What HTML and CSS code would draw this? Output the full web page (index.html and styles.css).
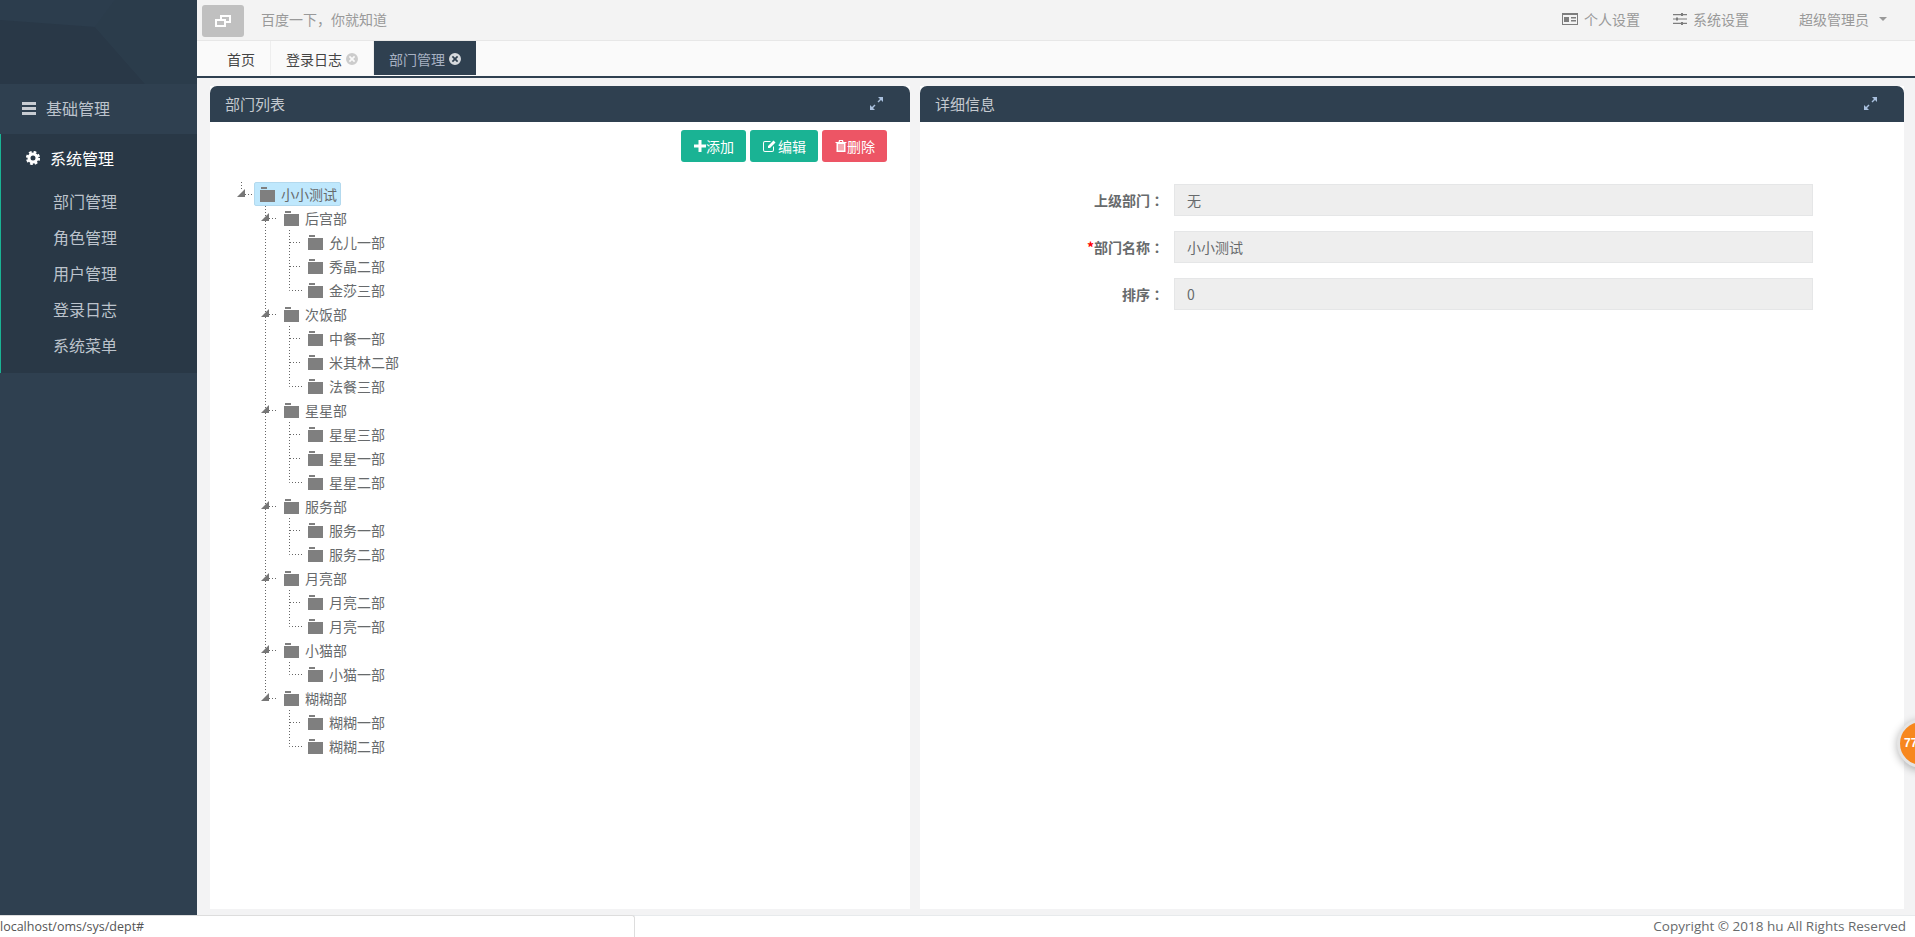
FILE: index.html
```html
<!DOCTYPE html>
<html lang="zh-CN">
<head>
<meta charset="utf-8">
<title>部门管理</title>
<link rel="stylesheet" href="styles.css">
</head>
<body>

<svg class="defs" aria-hidden="true">
	<symbol id="sw-root" viewBox="0 0 24 24">
		<path class="dots" d="M11.5 0V7M15 12.5H24"/>
		<path class="tri" d="M15 7V15H7Z"/>
	</symbol>
	<symbol id="sw-open" viewBox="0 0 24 24">
		<path class="dots" d="M11.5 0V24M15 12.5H24"/>
		<path class="tri" d="M15 7V15H7Z"/>
	</symbol>
	<symbol id="sw-open-last" viewBox="0 0 24 24">
		<path class="dots" d="M11.5 0V8M15 12.5H24"/>
		<path class="tri" d="M15 7V15H7Z"/>
	</symbol>
	<symbol id="sw-center" viewBox="0 0 24 24">
		<path class="dots" d="M11.5 0V24M12 12.5H24"/>
	</symbol>
	<symbol id="sw-bottom" viewBox="0 0 24 24">
		<path class="dots" d="M11.5 0V12.5H24"/>
	</symbol>
	<symbol id="folder" viewBox="0 0 15 15">
		<path d="M1 0H7V2H1ZM0 3H15V15H0Z"/>
	</symbol>
	<symbol id="expand" viewBox="0 0 13 13">
		<path d="M8 0H13V5L11 3L8.5 5.5L7.5 4.5L10 2ZM5 13H0V8L2 10L4.5 7.5L5.5 8.5L3 11Z"/>
	</symbol>
	<symbol id="close" viewBox="0 0 12 12">
		<path fill-rule="evenodd" d="M6 0A6 6 0 1 1 6 12A6 6 0 1 1 6 0ZM4 2.8L2.8 4L4.8 6L2.8 8L4 9.2L6 7.2L8 9.2L9.2 8L7.2 6L9.2 4L8 2.8L6 4.800Z"/>
	</symbol>
</svg>

<aside class="sidebar">
	<div class="sidebarHead">
		<svg viewBox="0 0 197 84" width="197" height="84" preserveAspectRatio="none">
			<rect width="197" height="84" fill="#2c3d4d"/>
			<path d="M0 20L95 27L145 84H0Z" fill="#293847"/>
			<path d="M95 27L115 0H197V84H145Z" fill="#2b3c4b"/>
		</svg>
	</div>
	<a class="menuTitle">
		<svg class="menuIcon" viewBox="0 0 14 13" width="14" height="13"><path d="M0 0H14V3H0ZM0 5H14V8H0ZM0 10H14V13H0Z"/></svg>
		基础管理
	</a>
	<div class="menuOpen">
		<a class="menuTitle menuTitleActive">
			<svg class="gear" viewBox="0 0 14 14" width="14" height="14">
				<circle cx="7" cy="7" r="4" fill="none" stroke="#fff" stroke-width="3"/>
				<circle cx="7" cy="7" r="6" fill="none" stroke="#fff" stroke-width="2.200" stroke-dasharray="2.700 2"/>
			</svg>
			系统管理
		</a>
		<ul class="subMenu">
			<li>部门管理</li>
			<li>角色管理</li>
			<li>用户管理</li>
			<li>登录日志</li>
			<li>系统菜单</li>
		</ul>
	</div>
</aside>

<div class="main">
	<header class="topBar">
		<button class="toggleBtn">
			<svg viewBox="0 0 16 12" width="16" height="12"><path fill="#fff" fill-rule="evenodd" d="M5 0H16V8H11V12H0V4H5ZM7 2V4H11V6H14V2ZM2 6V10H9V6Z"/></svg>
		</button>
		<span class="slogan">百度一下，你就知道</span>
		<div class="topRight">
			<a class="topLink">
				<svg viewBox="0 0 16 12" width="16" height="12"><path fill="#7d7d7d" fill-rule="evenodd" d="M0 0H16V12H0ZM1 2V11H15V2ZM2 4H7V9H2ZM9 4H14V5.500H9ZM9 7H14V8.500H9Z"/></svg>
				个人设置
			</a>
			<a class="topLink">
				<svg viewBox="0 0 14 12" width="14" height="12"><path fill="#7d7d7d" d="M0 1H8V0H10V1H14V2.200H10V3H8V2.200H0ZM0 5.400H3V4.500H5V5.400H14V6.600H5V7.500H3V6.600H0ZM0 9.800H8V9H10V9.800H14V11H10V12H8V11H0Z"/></svg>
				系统设置
			</a>
			<a class="topLink userLink">
				超级管理员
				<span class="caret"></span>
			</a>
		</div>
	</header>

	<nav class="tabs">
		<a class="tab tabHome">首页</a>
		<a class="tab">登录日志 <svg class="tabClose" width="12" height="12"><use href="#close"/></svg></a>
		<a class="tab tabActive">部门管理 <svg class="tabClose" width="12" height="12"><use href="#close"/></svg></a>
	</nav>

	<div class="content">
		<section class="panel panelLeft">
			<div class="panelHead">
				<span>部门列表</span>
				<svg class="expand" width="13" height="13"><use href="#expand"/></svg>
			</div>
			<div class="panelBody">
				<div class="toolbar">
					<button class="btn btnAdd">
						<svg viewBox="0 0 12 12" width="12" height="12"><path fill="#fff" d="M4.500 0H7.500V4.500H12V7.500H7.500V12H4.500V7.500H0V4.500H4.500Z"/></svg>添加
					</button>
					<button class="btn btnEdit">
						<svg viewBox="0 0 13 12" width="13" height="12"><path fill="#fff" fill-rule="evenodd" d="M2 1H8L7 2H2A1 1 0 0 0 1 3V10A1 1 0 0 0 2 11H9A1 1 0 0 0 10 10V7L11 6V10A2 2 0 0 1 9 12H2A2 2 0 0 1 0 10V3A2 2 0 0 1 2 1ZM10.500 0.500L12.500 2.500L7 8H5V6Z"/></svg>编辑
					</button>
					<button class="btn btnDel">
						<svg viewBox="0 0 11 12" width="12" height="12"><path fill="#fff" fill-rule="evenodd" d="M3.500 0H7.500L8 2H11V3H10V12H1V3H0V2H3ZM4.500 1L4.300 2H6.700L6.500 1ZM3 4V10.500H4V4ZM5 4V10.500H6V4ZM7 4V10.500H8V4Z"/></svg>删除
					</button>
				</div>

				<ul class="tree">
					<li>
						<div class="row"><svg class="sw"><use href="#sw-root"/></svg><a class="node nodeSelected"><svg class="fold"><use href="#folder"/></svg>小小测试</a></div>
						<ul>
							<li>
								<div class="row"><svg class="sw"><use href="#sw-open"/></svg><a class="node"><svg class="fold"><use href="#folder"/></svg>后宫部</a></div>
								<ul class="line">
									<li><div class="row"><svg class="sw"><use href="#sw-center"/></svg><a class="node"><svg class="fold"><use href="#folder"/></svg>允儿一部</a></div></li>
									<li><div class="row"><svg class="sw"><use href="#sw-center"/></svg><a class="node"><svg class="fold"><use href="#folder"/></svg>秀晶二部</a></div></li>
									<li><div class="row"><svg class="sw"><use href="#sw-bottom"/></svg><a class="node"><svg class="fold"><use href="#folder"/></svg>金莎三部</a></div></li>
								</ul>
							</li>
							<li>
								<div class="row"><svg class="sw"><use href="#sw-open"/></svg><a class="node"><svg class="fold"><use href="#folder"/></svg>次饭部</a></div>
								<ul class="line">
									<li><div class="row"><svg class="sw"><use href="#sw-center"/></svg><a class="node"><svg class="fold"><use href="#folder"/></svg>中餐一部</a></div></li>
									<li><div class="row"><svg class="sw"><use href="#sw-center"/></svg><a class="node"><svg class="fold"><use href="#folder"/></svg>米其林二部</a></div></li>
									<li><div class="row"><svg class="sw"><use href="#sw-bottom"/></svg><a class="node"><svg class="fold"><use href="#folder"/></svg>法餐三部</a></div></li>
								</ul>
							</li>
							<li>
								<div class="row"><svg class="sw"><use href="#sw-open"/></svg><a class="node"><svg class="fold"><use href="#folder"/></svg>星星部</a></div>
								<ul class="line">
									<li><div class="row"><svg class="sw"><use href="#sw-center"/></svg><a class="node"><svg class="fold"><use href="#folder"/></svg>星星三部</a></div></li>
									<li><div class="row"><svg class="sw"><use href="#sw-center"/></svg><a class="node"><svg class="fold"><use href="#folder"/></svg>星星一部</a></div></li>
									<li><div class="row"><svg class="sw"><use href="#sw-bottom"/></svg><a class="node"><svg class="fold"><use href="#folder"/></svg>星星二部</a></div></li>
								</ul>
							</li>
							<li>
								<div class="row"><svg class="sw"><use href="#sw-open"/></svg><a class="node"><svg class="fold"><use href="#folder"/></svg>服务部</a></div>
								<ul class="line">
									<li><div class="row"><svg class="sw"><use href="#sw-center"/></svg><a class="node"><svg class="fold"><use href="#folder"/></svg>服务一部</a></div></li>
									<li><div class="row"><svg class="sw"><use href="#sw-bottom"/></svg><a class="node"><svg class="fold"><use href="#folder"/></svg>服务二部</a></div></li>
								</ul>
							</li>
							<li>
								<div class="row"><svg class="sw"><use href="#sw-open"/></svg><a class="node"><svg class="fold"><use href="#folder"/></svg>月亮部</a></div>
								<ul class="line">
									<li><div class="row"><svg class="sw"><use href="#sw-center"/></svg><a class="node"><svg class="fold"><use href="#folder"/></svg>月亮二部</a></div></li>
									<li><div class="row"><svg class="sw"><use href="#sw-bottom"/></svg><a class="node"><svg class="fold"><use href="#folder"/></svg>月亮一部</a></div></li>
								</ul>
							</li>
							<li>
								<div class="row"><svg class="sw"><use href="#sw-open"/></svg><a class="node"><svg class="fold"><use href="#folder"/></svg>小猫部</a></div>
								<ul class="line">
									<li><div class="row"><svg class="sw"><use href="#sw-bottom"/></svg><a class="node"><svg class="fold"><use href="#folder"/></svg>小猫一部</a></div></li>
								</ul>
							</li>
							<li>
								<div class="row"><svg class="sw"><use href="#sw-open-last"/></svg><a class="node"><svg class="fold"><use href="#folder"/></svg>糊糊部</a></div>
								<ul>
									<li><div class="row"><svg class="sw"><use href="#sw-center"/></svg><a class="node"><svg class="fold"><use href="#folder"/></svg>糊糊一部</a></div></li>
									<li><div class="row"><svg class="sw"><use href="#sw-bottom"/></svg><a class="node"><svg class="fold"><use href="#folder"/></svg>糊糊二部</a></div></li>
								</ul>
							</li>
						</ul>
					</li>
				</ul>
			</div>
		</section>

		<section class="panel panelRight">
			<div class="panelHead">
				<span>详细信息</span>
				<svg class="expand" width="13" height="13"><use href="#expand"/></svg>
			</div>
			<div class="panelBody">
				<form class="detailForm">
					<label class="formLabel">上级部门<span class="colon" lang="zh-TW">：</span></label>
					<input class="formInput" type="text" value="无" readonly>
					<label class="formLabel"><span class="required">*</span>部门名称<span class="colon" lang="zh-TW">：</span></label>
					<input class="formInput" type="text" value="小小测试" readonly>
					<label class="formLabel">排序<span class="colon" lang="zh-TW">：</span></label>
					<input class="formInput" type="text" value="0" readonly>
				</form>
			</div>
		</section>
	</div>

	<footer class="footer">Copyright © 2018 hu All Rights Reserved</footer>
</div>

<div class="chatBadge"><span>77</span></div>
<div class="statusBubble">localhost/oms/sys/dept#</div>

</body>
</html>
```

FILE: styles.css
```css
html, body {
	height: 100%;
}
body {
	margin: 0;
	display: flex;
	overflow: hidden;
	font-family: "Noto Sans CJK SC", "Open Sans", sans-serif;
	font-size: 14px;
	color: #676a6c;
	background-color: #f3f3f4;
}
ul {
	margin: 0;
	padding: 0;
	list-style: none;
}
.defs {
	width: 0;
	height: 0;
	display: block;
	overflow: hidden;
}
.dots {
	fill: none;
	stroke: #666;
	stroke-width: 1;
	stroke-dasharray: 1 2;
}
.tri {
	fill: #777;
}

/* sidebar */
.sidebar {
	width: 197px;
	flex-shrink: 0;
	background-color: #2f4050;
	font-size: 16px;
	color: #bcc3cc;
}
.sidebarHead {
	height: 84px;
}
.sidebarHead svg {
	display: block;
}
.menuTitle {
	display: flex;
	align-items: center;
	height: 50px;
	box-sizing: border-box;
	padding-left: 22px;
	padding-bottom: 2px;
	gap: 10px;
}
.menuIcon {
	fill: #c8ccd2;
}
.menuOpen {
	height: 239px;
	box-sizing: border-box;
	background-color: #293846;
	border-left: 1px solid #1ab394;
}
.menuTitleActive {
	color: #fff;
	padding-left: 25px;
	gap: 10px;
}
.subMenu {
	padding-left: 52px;
}
.subMenu li {
	height: 36px;
	line-height: 34px;
}

/* top */
.main {
	flex: 1;
	min-width: 0;
	display: flex;
	flex-direction: column;
}
.topBar {
	height: 40px;
	display: flex;
	align-items: center;
	padding-left: 5px;
	background-color: #f3f3f3;
	border-bottom: 1px solid #e7e7e7;
	color: #999;
}
.toggleBtn {
	width: 42px;
	height: 32px;
	margin: 2px 0 0;
	padding: 0;
	border: 0;
	border-radius: 3px;
	background-color: #c0c0c0;
	display: flex;
	align-items: center;
	justify-content: center;
}
.slogan {
	margin-left: 17px;
	margin-bottom: 2px;
}
.topRight {
	margin-left: auto;
	display: flex;
	align-items: center;
	padding-right: 28px;
	margin-bottom: 2px;
}
.topLink {
	display: flex;
	align-items: center;
	gap: 6px;
	margin-left: 33px;
}
.userLink {
	margin-left: 50px;
	gap: 10px;
}
.caret {
	width: 0;
	height: 0;
	border-left: 4px solid transparent;
	border-right: 4px solid transparent;
	border-top: 4px solid #999;
}

.tabs {
	height: 37px;
	box-sizing: border-box;
	display: flex;
	background-color: #fafafa;
	border-bottom: 2px solid #2f4050;
	color: #444;
}
.tab {
	display: flex;
	align-items: center;
	gap: 4px;
	height: 34px;
	box-sizing: border-box;
	padding: 2px 15px 0;
	border-right: 1px solid #eee;
	white-space: nowrap;
}
.tabHome {
	width: 74px;
	padding-left: 30px;
	padding-right: 0;
}
.tabClose {
	fill: #ccc;
}
.tabActive {
	background-color: #2f4050;
	border-right: 0;
	color: #a7b1c2;
}
.tabActive .tabClose {
	fill: #d6d9dd;
}

/* panels */
.content {
	flex: 1;
	min-height: 0;
	display: flex;
	gap: 10px;
	padding: 8px 11px 6px 13px;
}
.panel {
	display: flex;
	flex-direction: column;
	background-color: #fff;
}
.panelLeft {
	width: 700px;
}
.panelRight {
	flex: 1;
}
.panelHead {
	height: 36px;
	box-sizing: border-box;
	flex-shrink: 0;
	display: flex;
	align-items: center;
	justify-content: space-between;
	padding: 0 27px 1px 15px;
	border-radius: 7px 7px 0 0;
	background-color: #2f4050;
	color: #c4c9cf;
	font-size: 15px;
}
.expand {
	fill: #a9c0de;
}
.panelBody {
	flex: 1;
}
.toolbar {
	display: flex;
	justify-content: flex-end;
	gap: 4px;
	padding: 8px 23px 0 0;
}
.btn {
	height: 32px;
	margin: 0;
	padding: 0 12px 0 13px;
	border: 0;
	border-radius: 3px;
	display: flex;
	align-items: center;
	color: #fff;
	font-family: inherit;
	font-size: 14px;
}
.btnAdd, .btnEdit {
	background-color: #1ab394;
}
.btnDel {
	background-color: #ed5565;
}
.btnEdit {
	gap: 2px;
}

/* tree */
.tree {
	margin: 20px 0 0 20px;
}
.tree ul {
	padding-left: 24px;
}
.tree ul.line {
	background-image: linear-gradient(#666 34%, transparent 34%);
	background-size: 1px 3px;
	background-position: 11px 0;
	background-repeat: repeat-y;
}
.row {
	display: flex;
	height: 24px;
}
.sw {
	width: 24px;
	height: 24px;
	flex-shrink: 0;
}
.node {
	display: flex;
	align-items: center;
	gap: 6px;
	padding: 0 6px;
	color: #676a6c;
}
.fold {
	width: 15px;
	height: 15px;
	fill: #7f7f7f;
}
.nodeSelected {
	box-sizing: border-box;
	padding: 0 3px 0 5px;
	background-color: #bfe8fd;
	border: 1px solid #b3d9ee;
	border-radius: 2px;
}

/* form */
.detailForm {
	display: grid;
	grid-template-columns: 244px 639px;
	grid-auto-rows: 32px;
	column-gap: 10px;
	row-gap: 15px;
	padding-top: 62px;
}
.formLabel {
	align-self: center;
	text-align: right;
	font-weight: bold;
	font-size: 14px;
	padding-bottom: 1px;
}
.colon {
	font-family: "Noto Sans CJK TC", sans-serif;
}
.required {
	color: #f00;
}
.formInput {
	box-sizing: border-box;
	width: 100%;
	height: 32px;
	padding: 0 12px 1px;
	border: 1px solid #e5e6e7;
	background-color: #eee;
	color: #676a6c;
	font-family: inherit;
	font-size: 14px;
}

/* bottom */
.footer {
	height: 21px;
	flex-shrink: 0;
	text-align: right;
	padding-right: 9px;
	background-color: #fff;
	border-top: 1px solid #e7eaec;
	font-family: "Open Sans", sans-serif;
	font-size: 13.500px;
	line-height: 21px;
}
.statusBubble {
	position: absolute;
	left: 0;
	bottom: 0;
	width: 635px;
	height: 22px;
	box-sizing: border-box;
	background-color: #fff;
	border-top: 1px solid #ddd;
	border-right: 1px solid #ddd;
	border-top-right-radius: 3px;
	font-family: "Open Sans", sans-serif;
	font-size: 12.500px;
	line-height: 21px;
	color: #555;
}
.chatBadge {
	position: absolute;
	left: 1897px;
	top: 719px;
	width: 49px;
	height: 49px;
	box-sizing: border-box;
	border: 3px solid #e4e4e4;
	border-radius: 50%;
	background-color: #f7871e;
	box-shadow: 0 2px 8px rgba(0, 0, 0, 0.3);
	padding-left: 4px;
	color: #fff;
	font-family: "Liberation Sans", sans-serif;
	font-size: 12px;
	font-weight: bold;
	line-height: 43px;
}
```
